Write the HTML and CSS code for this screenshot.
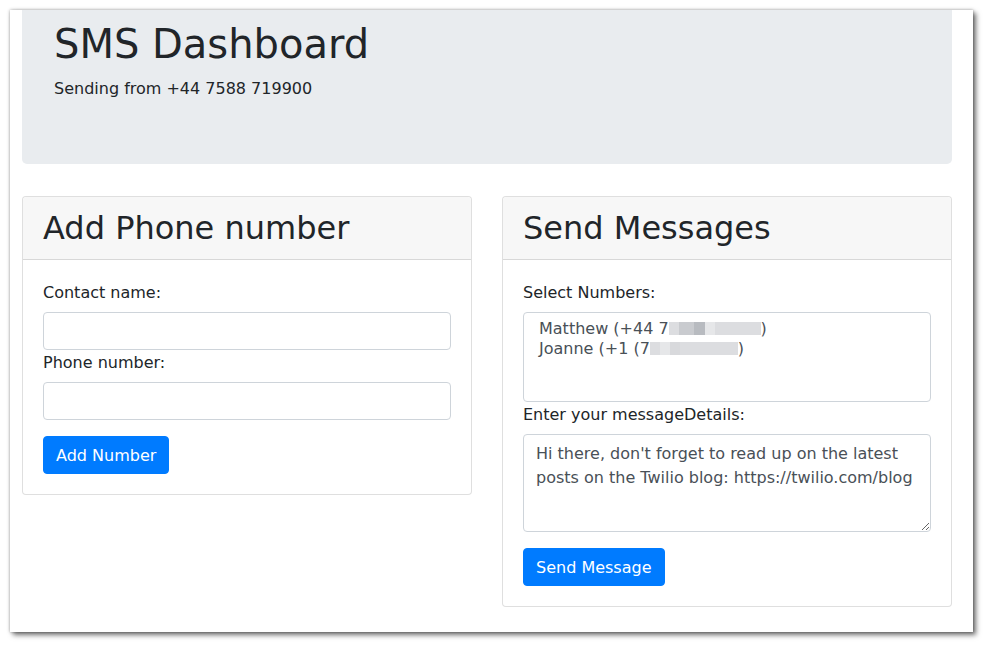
FILE: index.html
```html
<!DOCTYPE html>
<html>
<head>
<meta charset="utf-8">
<link rel="stylesheet" href="styles.css">
</head>
<body>
<div class="frame">
  <div class="window">
    <div class="jumbotron">
      <h1 class="title">SMS Dashboard</h1>
      <p class="lead">Sending from +44 7588 719900</p>
    </div>
    <div class="row">
      <div class="card">
        <div class="card-header"><h2>Add Phone number</h2></div>
        <div class="card-body">
          <label class="label">Contact name:</label>
          <input class="input" type="text">
          <label class="label">Phone number:</label>
          <input class="input" type="text">
          <button class="btn">Add Number</button>
        </div>
      </div>
      <div class="card">
        <div class="card-header"><h2>Send Messages</h2></div>
        <div class="card-body">
          <label class="label">Select Numbers:</label>
          <div class="select">
            <div class="opt">Matthew (+44 7<span class="blur"><i class="b1"></i><i class="b2"></i><i class="b3"></i><i class="b4"></i><i class="b5"></i></span>)</div>
            <div class="opt">Joanne (+1 (7<span class="blur"><i class="b1"></i><i class="b4"></i><i class="b6"></i><i class="b7"></i></span>)</div>
          </div>
          <label class="label">Enter your messageDetails:</label>
          <textarea class="textarea">Hi there, don't forget to read up on the latest posts on the Twilio blog: https://twilio.com/blog</textarea>
          <button class="btn btn-send">Send Message</button>
        </div>
      </div>
    </div>
  </div>
</div>
</body>
</html>
```
FILE: styles.css
```css
* { box-sizing: border-box; }
html, body { margin: 0; padding: 0; background: #ffffff; }
body {
  font-family: "DejaVu Sans", sans-serif;
  font-size: 16px;
  line-height: 1.5;
  color: #212529;
}
.frame { padding: 10px 0 0 10px; width: 989px; height: 648px; }
.window {
  width: 963px;
  height: 622px;
  background: #fff;
  box-shadow: 3px 3px 5px rgba(0,0,0,0.55), 0 0 3px rgba(0,0,0,0.35);
  overflow: hidden;
}
.jumbotron {
  margin-left: 12px;
  width: 930px;
  height: 154px;
  background: #e9ecef;
  border-radius: 0 0 5px 5px;
  padding: 10px 32px 0;
}
.title {
  margin: 0 0 9px;
  font-size: 40px;
  line-height: 48px;
  font-weight: 400;
}
.lead { margin: 0; font-size: 16px; line-height: 24px; }
.row {
  margin: 32px 0 0 12px;
  width: 930px;
  display: grid;
  grid-template-columns: 450px 450px;
  column-gap: 30px;
  align-items: start;
}
.card {
  border: 1px solid rgba(0,0,0,0.125);
  border-radius: 4px;
  background: #fff;
}
.card-header {
  background: #f7f7f7;
  border-bottom: 1px solid rgba(0,0,0,0.125);
  padding: 12px 20px;
  border-radius: 4px 4px 0 0;
}
.card-header h2 {
  margin: 0;
  font-size: 32px;
  line-height: 1.2;
  font-weight: 400;
}
.card-body { padding: 20px; display: flex; flex-direction: column; align-items: flex-start; }
.label { display: block; padding-top: 1px; margin-bottom: 7px; line-height: 24px; }
.input {
  display: block;
  width: 100%;
  height: 38px;
  border: 1px solid #ced4da;
  border-radius: 4px;
  padding: 6px 12px;
  font: inherit;
  background: #fff;
}
.btn {
  margin-top: 16px;
  background: #007bff;
  color: #fff;
  border: 1px solid #007bff;
  border-radius: 4px;
  padding: 7px 12px 5px;
  font-family: "DejaVu Sans", sans-serif;
  font-size: 16px;
  line-height: 24px;
  height: 38px;
}
.select {
  width: 100%;
  height: 90px;
  border: 1px solid #ced4da;
  border-radius: 4px;
  padding: 6px 12px 0 15px;
  color: #495057;
}
.opt { line-height: 20px; white-space: nowrap; }
.blur { display: inline-flex; vertical-align: middle; height: 13px; margin-top: -2px; }
.blur i { display: block; height: 13px; }
.b1 { width: 10px; background: #dcdde0; }
.b2 { width: 15px; background: #c9cbcf; }
.b3 { width: 11px; background: #b8bbc0; }
.b4 { width: 10px; background: #e6e7e9; }
.b5 { width: 46px; background: #dcdde0; }
.b6 { width: 10px; background: #d8d9dc; }
.b7 { width: 58px; background: #dcdde0; }
.textarea {
  display: block;
  width: 100%;
  height: 98px;
  border: 1px solid #ced4da;
  border-radius: 4px;
  padding: 7px 12px 5px;
  font-family: "DejaVu Sans", sans-serif;
  font-size: 16px;
  line-height: 24px;
  color: #495057;
  resize: vertical;
}
```
